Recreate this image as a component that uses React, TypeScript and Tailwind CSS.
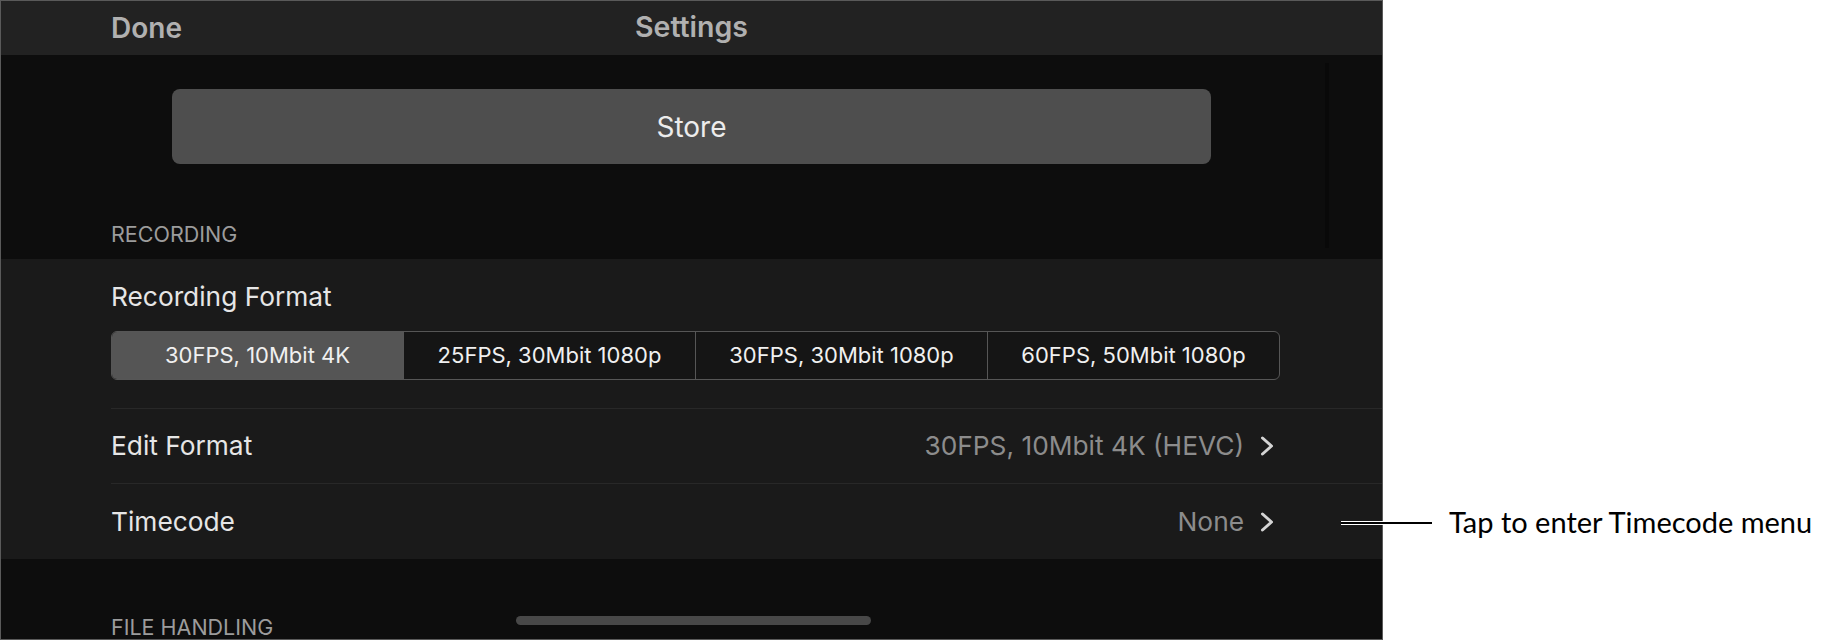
import React from 'react';

const segments = ['30FPS, 10Mbit 4K', '25FPS, 30Mbit 1080p', '30FPS, 30Mbit 1080p', '60FPS, 50Mbit 1080p'];

function Chevron() {
  return (
    <svg width="14" height="20" viewBox="0 0 14 20" className="shrink-0">
      <polyline points="2.5,2 11.5,10 2.5,18" fill="none" stroke="#d4d4d4" strokeWidth="3" strokeLinecap="round" strokeLinejoin="round" />
    </svg>
  );
}

function NavRow({ label, value, first }: { label: string; value: string; first?: boolean }) {
  return (
    <div className={`ml-[110px] flex items-center justify-between pr-[108px] border-t border-[#282828] ${first ? 'h-[75px]' : 'h-[76px]'}`}>
      <span className="text-[26.3px] text-[#e6e6e6]">{label}</span>
      <div className="flex items-center gap-[16px]">
        <span className="text-[26.3px] text-[#8c8c8c]">{value}</span>
        <Chevron />
      </div>
    </div>
  );
}

export default function App() {
  return (
    <div className="relative flex w-[1823px] h-[640px] bg-white overflow-hidden font-['Inter',sans-serif]">
      {/* device screen */}
      <div className="relative w-[1383px] h-[640px] shrink-0 flex flex-col bg-[#0d0d0d] border border-[#5a5a5a] overflow-hidden">
        {/* nav bar */}
        <div className="grid grid-cols-[1fr_auto_1fr] items-center h-[55px] shrink-0 bg-[#222222] -mt-px">
          <span className="pl-[110px] text-[28px] font-semibold text-[#b0b0b0]">Done</span>
          <span className="text-[28.5px] font-semibold text-[#b0b0b0]">Settings</span>
          <span />
        </div>

        <div className="px-[171px] pt-[34px]">
          <div className="h-[75px] rounded-[8px] bg-[#4e4e4e] flex items-center justify-center text-[28px] text-[#ececec]">
            Store
          </div>
        </div>

        <div className="pl-[110px] pt-[58px] pb-[13px] leading-[24px] text-[21.5px] text-[#9c9c9c]">RECORDING</div>

        {/* recording group */}
        <div className="bg-[#1a1a1a] flex flex-col">
          <div className="pl-[110px] pt-[22px] leading-[32px] text-[26.3px] text-[#e6e6e6]">Recording Format</div>
          <div className="ml-[110px] mt-[18px] mb-[28px] w-[1169px] h-[49px] flex rounded-[6px] border border-[#565656] overflow-hidden bg-[#151515]">
            {segments.map((s, i) => (
              <div
                key={s}
                className={`flex-1 flex items-center justify-center text-[22px] text-[#f0f0f0] ${i > 0 ? 'border-l border-[#565656]' : ''} ${i === 0 ? 'bg-[#555555]' : ''}`}
              >
                {s}
              </div>
            ))}
          </div>
          <NavRow label="Edit Format" value="30FPS, 10Mbit 4K (HEVC)" first />
          <NavRow label="Timecode" value="None" />
        </div>

        <div className="pl-[110px] pt-[56px] leading-[24px] text-[21.5px] text-[#9c9c9c]">FILE HANDLING</div>

        {/* scroll indicator */}
        <div className="absolute left-[1324px] top-[62px] w-[4px] h-[185px] bg-[#090909]" />
        {/* home indicator */}
        <div className="absolute left-[515px] bottom-[14px] w-[355px] h-[9px] rounded-full bg-[#484848]" />
      </div>

      {/* callout */}
      <div className="flex-1 flex items-start pl-[66px] pt-[505px]">
        <span className="font-['Lato',sans-serif] text-[29px] leading-[34px] text-black">Tap to enter Timecode menu</span>
      </div>
      <div className="absolute left-[1341px] top-[521px] w-[91px] h-[4px] py-px bg-white">
        <div className="h-[2px] bg-black" />
      </div>
    </div>
  );
}
